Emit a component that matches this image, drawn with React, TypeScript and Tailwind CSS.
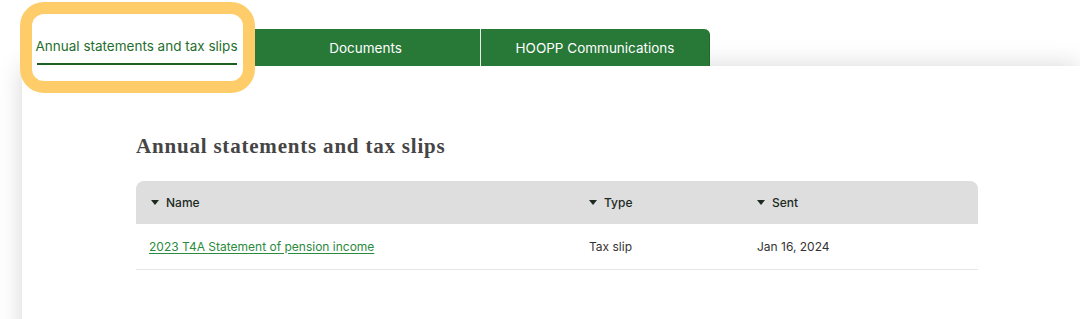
import { ReactNode } from "react";

const sans = "font-['Inter','Open_Sans',sans-serif]";

function Caret() {
  return (
    <svg width="8" height="5" viewBox="0 0 8 5" className="mr-[7px] shrink-0">
      <path d="M0 0h8L4 5z" fill="#1c2a1f" />
    </svg>
  );
}

function HeadCell({ children, className = "" }: { children: ReactNode; className?: string }) {
  return (
    <div className={`flex items-center pl-[15px] text-[12px] font-medium text-[#1c2a1f] ${className}`}>
      <Caret />
      {children}
    </div>
  );
}

export default function App() {
  const rows = [{ name: "2023 T4A Statement of pension income", type: "Tax slip", sent: "Jan 16, 2024" }];

  return (
    <div className={`relative h-[319px] w-[1080px] overflow-hidden bg-white ${sans}`}>
      {/* Tabs */}
      <div className="relative z-10 ml-[22px] mt-[29px] flex h-[37px]">
        <div className="flex w-[229px] flex-col items-center justify-end bg-white pb-[1px]">
          <span className="text-[13.5px] font-normal leading-[16px] text-[#1f6e2f]">Annual statements and tax slips</span>
          <div className="mt-[9px] h-[2px] w-[200px] bg-[#1b5e20]" />
        </div>
        <div className="flex w-[229px] items-center justify-center bg-[#287837] pt-[2px] text-[13.5px] font-normal text-white">
          Documents
        </div>
        <div className="w-[1px] bg-[#e8efe9]" />
        <div className="flex w-[229px] items-center justify-center rounded-tr-[6px] border-r border-[#1e6a2c] bg-[#287837] pt-[2px] text-[13.5px] font-normal text-white">
          HOOPP Communications
        </div>
      </div>

      {/* Panel */}
      <div className="ml-[22px] h-[300px] bg-white shadow-[0_0_24px_rgba(0,0,0,0.16)]">
        <div className="ml-[114px] w-[842px] pt-[66px]">
          <h2 className="font-['Georgia','Liberation_Serif',serif] text-[21px] font-bold leading-[28px] tracking-[0.8px] text-[#454545]">
            Annual statements and tax slips
          </h2>
          <div className="mt-[21px]">
            <div className="flex h-[43px] rounded-t-[8px] bg-[#dedede]">
              <HeadCell className="w-[438px]">Name</HeadCell>
              <HeadCell className="w-[168px]">Type</HeadCell>
              <HeadCell className="flex-1">Sent</HeadCell>
            </div>
            {rows.map((r) => (
              <div key={r.name} className="flex h-[46px] items-center border-b border-[#e6e6e6] text-[12px]">
                <div className="w-[438px] pl-[13px]">
                  <a href="#" className="text-[#2b8a3e] underline underline-offset-2">
                    {r.name}
                  </a>
                </div>
                <div className="w-[168px] pl-[15px] text-[#333]">{r.type}</div>
                <div className="flex-1 pl-[15px] text-[#333]">{r.sent}</div>
              </div>
            ))}
          </div>
        </div>
      </div>

      {/* Highlight */}
      <div className="pointer-events-none absolute left-[20px] top-[2px] z-20 h-[91px] w-[235px] rounded-[24px] border-[12px] border-[#fecd6a]" />
    </div>
  );
}
